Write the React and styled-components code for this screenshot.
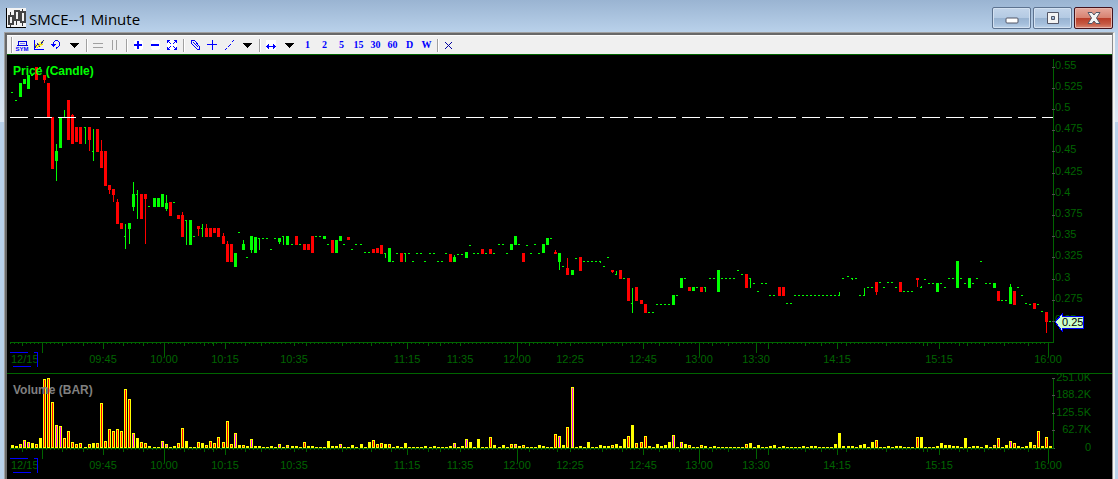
import React from 'react';
import styled, { createGlobalStyle } from 'styled-components';

const GlobalStyle = createGlobalStyle`
    * {
        box-sizing: border-box;
    }
    body {
        margin: 0;
        background: #b9d1ea;
        font-family: 'Liberation Sans', Arial, sans-serif;
    }
`;

const Window = styled.main`
    display: flex;
    flex-direction: column;
    min-height: 100vh;
    padding: 0 3px 0 4px;
    background:
        linear-gradient(#9ab4d2, #b9d1ea) 0 0 / 100% 32px no-repeat,
        linear-gradient(#b9d1ea, #dde8f4) 0 32px / 100% 90px no-repeat,
        #b9d1ea;
`;

const TitleBar = styled.header`
    display: flex;
    align-items: center;
    height: 32px;
    padding: 0 2px;
`;

const Title = styled.h1`
    flex: 1;
    margin: 0 0 0 3px;
    padding-top: 5px;
    font: 400 15px/20px 'Open Sans', sans-serif;
    color: #000;
`;

const WindowButtons = styled.div`
    display: flex;
    gap: 2px;
    padding-top: 4px;
`;

const WindowButton = styled.button`
    display: flex;
    align-items: center;
    justify-content: center;
    width: 39px;
    height: 22px;
    padding: 0;
    border: 1px solid ${({ $close }) => ($close ? '#43121c' : '#5d7390')};
    border-radius: 2px;
    background: ${({ $close }) => ($close
        ? 'linear-gradient(#e6a89c, #d88372 48%, #b93c28 50%, #c65a44 80%, #d98a78)'
        : 'linear-gradient(#c3d5ea, #b4cae3 48%, #98b3d1 50%, #a5bfdc 80%, #bdd3ea)')};
    box-shadow: inset 0 0 0 1px ${({ $close }) => ($close ? '#e7b5ab' : '#d3e1f1')};
`;

const Frame = styled.section`
    flex: 1;
    display: flex;
    flex-direction: column;
    border-top: 1px solid #a0a0a0;
    border-left: 1px solid #a0a0a0;
    border-right: 2px solid #f4f4f2;
`;

const FrameInner = styled.div`
    flex: 1;
    border-top: 2px solid #696969;
    border-left: 2px solid #696969;
    border-right: 1px solid #8c8c8c;
    background: #000;
`;

const ToolbarRow = styled.div`
    display: flex;
    align-items: center;
    height: 20px;
    padding-left: 4px;
    border-top: 1px solid #fff;
    border-bottom: 1px solid #006400;
    background: #f0f0f0;
`;

const Grip = styled.span`
    width: 3px;
    height: 16px;
    border-left: 1px solid #a0a0a0;
    background: #fff;
    background-clip: padding-box;
    border-right: 1px solid #f0f0f0;
`;

const Separator = styled.span`
    width: 2px;
    height: 13px;
    margin: 0 2px;
    border-left: 1px solid #a0a0a0;
    border-right: 1px solid #fff;
`;

const ToolButton = styled.button`
    display: flex;
    align-items: center;
    justify-content: center;
    width: ${({ $wide }) => ($wide ? 19 : 17)}px;
    height: 18px;
    padding: 0;
    border: none;
    background: transparent;
    font: bold 10px/18px 'Liberation Serif', 'Times New Roman', serif;
    color: #0000ff;
`;

const Icon = styled.svg`
    display: block;
    fill: none;
    stroke: none;
    shape-rendering: ${({ $smooth }) => ($smooth ? 'auto' : 'crispEdges')};
`;

const LogoIcon = styled(Icon)`
    margin-top: 4px;
`;

const Panel = styled.svg`
    display: block;
    width: 100%;
    overflow: visible;
    shape-rendering: crispEdges;
`;

const AxisText = styled.text`
    font-family: 'Liberation Sans', Arial, sans-serif;
    font-size: 11px;
    fill: ${({ $color }) => $color || '#006400'};
    text-anchor: ${({ $anchor }) => $anchor || 'start'};
`;

const PanelTitle = styled.text`
    font-family: 'Liberation Sans', Arial, sans-serif;
    font-size: 12px;
    font-weight: bold;
    fill: ${({ $color }) => $color};
`;

const GREEN = '#00ff00';
const RED = '#ff0000';
const AXIS = '#006400';
const RIGHT = 1053;

// x, colour, body top, body bottom, wick top, wick bottom
const CANDLES = [
    [19, 'g', 83, 97], [23, 'g', 79, 84], [27, 'g', 75, 89], [35, 'r', 67, 80],
    [43, 'r', 75, 80, 75, 83], [47, 'r', 83, 117], [51, 'r', 117, 169],
    [55, 'g', 151, 161, 144, 181], [59, 'g', 117, 148], [67, 'r', 100, 140],
    [71, 'r', 115, 144, 114, 144], [75, 'r', 127, 142], [79, 'r', 127, 144],
    [88, 'r', 127, 140, 127, 151], [96, 'r', 129, 152], [100, 'r', 151, 168, 140, 168],
    [104, 'r', 151, 186], [108, 'r', 185, 190, 185, 194], [112, 'r', 189, 195, 189, 202],
    [116, 'r', 202, 224, 199, 224], [120, 'r', 223, 229], [128, 'g', 223, 229, 223, 244],
    [132, 'g', 194, 207, 182, 211], [140, 'r', 194, 219], [144, 'r', 194, 199, 194, 244],
    [153, 'g', 198, 207], [157, 'g', 198, 207], [161, 'g', 194, 207],
    [165, 'g', 203, 209, 195, 211], [169, 'r', 202, 216], [177, 'r', 215, 219],
    [181, 'r', 215, 237, 212, 237], [189, 'g', 220, 245], [197, 'r', 226, 229, 226, 236],
    [205, 'r', 228, 237, 224, 237], [209, 'r', 228, 237], [213, 'r', 228, 233],
    [217, 'r', 228, 237], [222, 'r', 236, 244, 233, 244], [226, 'r', 244, 262, 241, 262],
    [230, 'r', 244, 262], [234, 'g', 253, 267], [242, 'g', 244, 250, 240, 250],
    [250, 'g', 236, 250, 236, 253], [254, 'g', 237, 253], [278, 'g', 238, 242, 238, 244],
    [286, 'g', 236, 245], [295, 'r', 236, 245], [303, 'r', 244, 250], [307, 'r', 244, 250],
    [311, 'r', 236, 253], [323, 'g', 236, 239], [331, 'r', 240, 253], [335, 'g', 240, 253],
    [339, 'g', 236, 241], [347, 'r', 237, 240], [372, 'r', 249, 253], [376, 'r', 248, 253],
    [380, 'r', 245, 254], [388, 'g', 248, 262], [400, 'r', 253, 262], [449, 'r', 254, 262],
    [453, 'g', 257, 262, 255, 262], [465, 'g', 252, 258], [481, 'r', 249, 254],
    [489, 'r', 249, 254], [510, 'g', 244, 250], [514, 'g', 236, 245], [522, 'r', 253, 262],
    [542, 'g', 244, 253], [546, 'g', 238, 245], [554, 'r', 252, 254, 250, 254],
    [558, 'g', 253, 262, 253, 270], [566, 'r', 268, 275, 258, 275], [571, 'g', 270, 275],
    [579, 'r', 257, 271], [611, 'r', 270, 272, 270, 273], [619, 'r', 270, 279],
    [627, 'r', 278, 301], [635, 'r', 287, 301], [640, 'r', 300, 304], [644, 'r', 304, 313],
    [672, 'g', 295, 305], [680, 'g', 278, 288], [688, 'r', 287, 291], [692, 'g', 287, 291],
    [700, 'r', 287, 292], [717, 'g', 270, 292], [745, 'r', 274, 288], [778, 'r', 287, 296],
    [782, 'r', 287, 296], [875, 'r', 282, 292, 282, 295], [899, 'r', 282, 292],
    [916, 'r', 278, 280, 278, 287], [936, 'g', 283, 292], [956, 'g', 261, 288],
    [968, 'g', 278, 288], [993, 'g', 283, 288], [997, 'r', 291, 301],
    [1009, 'g', 287, 304, 284, 304], [1013, 'r', 291, 305], [1033, 'r', 303, 309],
    [1045, 'r', 312, 322, 312, 333],
];

// open equals close, with a wick: x, y, wick top, wick bottom
const STEMS = [
    [63, 117, 110, 117], [84, 127, 127, 144], [92, 151, 129, 161], [124, 236, 224, 249],
    [136, 194, 190, 219], [185, 220, 220, 245], [201, 228, 224, 237], [258, 238, 238, 250],
    [282, 236, 236, 245], [384, 253, 253, 258], [404, 253, 253, 262], [599, 261, 261, 263],
    [615, 274, 271, 275], [631, 303, 288, 313], [704, 287, 287, 292], [749, 278, 278, 288],
    [838, 295, 292, 296], [851, 278, 278, 280], [863, 295, 288, 296], [920, 287, 286, 288],
];

// flat minutes grouped by price level: y, then every x
const FLATS = [
    [92, 11], [100, 15], [75, 31], [67, 39], [206, 148], [202, 173], [236, 193, 315, 319],
    [232, 238], [257, 246, 607], [238, 262, 266, 274, 550], [249, 270, 351],
    [244, 291, 299, 327, 343, 355, 360, 498, 502, 518, 534], [252, 364, 368],
    [261, 392, 412, 424, 437, 441, 583, 587, 591, 595, 980],
    [253, 396, 408, 416, 420, 429, 433, 445, 473, 477, 485, 493, 506, 530, 538],
    [254, 457, 461], [245, 469, 526], [266, 562, 603], [258, 575],
    [278, 623, 684, 709, 713, 721, 725, 729, 733, 842, 855, 948, 952, 960, 976],
    [312, 648, 652], [304, 656, 660, 664, 668, 1029, 1037], [287, 696, 867, 871, 883, 895, 944, 1017],
    [270, 737], [274, 741], [283, 753, 761, 765, 928, 932, 940, 964, 972, 985, 989],
    [291, 757, 903, 907, 911],
    [295, 676, 769, 773, 794, 798, 802, 806, 810, 814, 818, 822, 826, 830, 834, 859, 1021],
    [303, 786, 790, 1025], [276, 847], [282, 879, 887, 891], [279, 924],
    [300, 1001, 1005], [311, 1041], [321, 1049],
];

// one entry per traded minute, the letter is the colour of the core
const VOLUMES = `
    3 2 4m 8m 6m 5 4r 10 69r 70r 46r 23m 22m 10r 17r 6r 4r 5r
    1 4r 5 5r 45r 7r 19r 17r 19r 17r 59r 49r 15m 10 6r 5r 2
    1 1 7m 4m 1 2 5r 20r 7 1 1 6r 5 3r 7r 5r 11r
    6r 27r 4r 15m 3 3r 2 9m 2 2 1 1 2 1 4m 1 3m
    2 2 1 6r 2 2 1 1 1 7 2 2 4m 1 1 3 1
    4 1 6 8r 4r 5r 4 4r 1 2 1 5 1 1 1 1 2
    1 2 1 1 1 2 5m 1 2 9m 6 1 9 1 1 11r 3
    1 3 1 4r 4m 2 3r 1 1 1 3 2 1 1 14r 12m 3 21r
    61m 1 2 1 6 1 1 3 2 2 3r 4 2 9 12r 23 5r
    6r 12r 2 1 4 2 3 6 13m 1 6m 4 3r 1 1 3r 2
    1 2 1 1 1 1 1 1 1 4r 5 1 3 1 1 2 3
    1 2 1 1 1 1 2 1 2 2 1 1 1 1 4 15 2
    2 2 1 3 4 1 6 8r 1 1 2 1 2 2 1 1 1
    11r 11 1 1 1 2 5 3 3 2 2 1 10 1 2 2 1
    3 1 3m 10r 1 3 7m 5r 2 1 2 6 3r 17r 2 11r 2
`.trim().split(/\s+/);

const PRICES = ['0.55', '0.525', '0.5', '0.475', '0.45', '0.425', '0.4', '0.375', '0.35', '0.325', '0.3', '0.275', '0.25'];

const VOLUME_SCALE = [['251.0K', 378], ['188.2K', 395], ['125.5K', 413], ['62.7K', 430], ['0', 448]];

const TIMES = [
    ['09:45', 103], ['10:00', 164], ['10:15', 225], ['10:35', 294], ['11:15', 407], ['11:35', 460],
    ['12:00', 517], ['12:25', 570], ['12:45', 643], ['13:00', 699], ['13:30', 756], ['14:15', 837],
    ['15:15', 939], ['16:00', 1048],
];

const TICKS = {
    3: [22, 62, 83, 123, 143, 184, 204, 213, 245, 261, 294, 306, 342, 371, 391, 428, 440, 460, 529, 557, 570,
        602, 622, 659, 679, 712, 728, 805, 821, 846, 886, 923, 927, 959, 967, 984, 1004, 1028],
    6: [103, 225, 407, 643, 768, 837, 939],
    10: [42, 756],
    14: [164, 517, 699, 1048],
};

const minuteX = (index) => 11 + Math.floor(index * 4.05835);

const Candle = ({ data }) => {
    const [x, color, top, bottom, wickTop, wickBottom] = data;
    const fill = color === 'g' ? GREEN : RED;
    return (
        <g fill={fill}>
            <rect x={x} y={top} width="3" height={bottom - top} />
            {wickBottom && <rect x={x + 1} y={wickTop} width="1" height={wickBottom - wickTop} />}
        </g>
    );
}

const VolumeBar = ({ index, value }) => {
    const x = minuteX(index);
    const height = parseInt(value, 10);
    const core = { r: '#ff0000', m: '#ff00ff' }[value.slice(-1)];
    return (
        <g>
            <rect x={x} y={448 - height} width="3" height={height} fill="#ffff00" />
            {core && <rect x={x + 1} y={449 - height} width="1" height={height - 2} fill={core} />}
        </g>
    );
}

const TimeAxis = ({ y }) => (
    <g>
        <rect x="10" y={y} width={RIGHT - 9} height="1" fill={AXIS} />
        <g fill={AXIS}>
            {VOLUMES.map((_, i) => (
                <rect key={i} x={minuteX(i) - 1} y={y + 1} width="1" height="1" />
            ))}
            {Object.entries(TICKS).map(([length, xs]) => xs.map((x) => (
                <rect key={x} x={x} y={y + 1} width="1" height={length} />
            )))}
        </g>
        <AxisText x="11" y={y + 21}>12/15</AxisText>
        {TIMES.map(([label, x]) => (
            <AxisText key={label} x={x} y={y + 21} $anchor="middle">{label}</AxisText>
        ))}
        <g fill="#0000ff">
            <rect x="10" y={y + 10} width="18" height="1" />
            <rect x="34" y={y + 10} width="4" height="1" />
            <rect x="37" y={y + 10} width="1" height="15" />
            <rect x="13" y={y + 24} width="18" height="1" />
        </g>
    </g>
);

const PriceTag = () => (
    <g>
        <path d="M1055 322 L1062 314 V316 H1083 V328 H1062 V331 Z" fill="#ccffcc" />
        <path d="M1055 322 L1062 314 V316.5 H1083.5 V328 H1062 V331 Z" stroke="#0000ff" strokeWidth="1" fill="none" />
        <rect x="1063" y="328" width="21" height="1" fill="#0000ff" />
        <AxisText x="1062" y="326" $color="#000">0.25</AxisText>
    </g>
);

const PricePanel = () => (
    <Panel viewBox="7 55 1105 318" role="img" aria-label="Price chart">
        {CANDLES.map((data) => <Candle key={data[0]} data={data} />)}
        <g fill={GREEN}>
            {STEMS.map(([x, y, top, bottom]) => (
                <g key={x}>
                    <rect x={x} y={y} width="2" height="1" />
                    <rect x={x + 1} y={top} width="1" height={bottom - top} />
                </g>
            ))}
            {FLATS.map(([y, ...xs]) => xs.map((x) => (
                <rect key={x} x={x} y={y} width="2" height="1" />
            )))}
        </g>
        <path d="M10 117.5 H1053" stroke="#fff" strokeDasharray="18 6" />
        <rect x={RIGHT} y="59" width="1" height="284" fill={AXIS} />
        {PRICES.map((price, i) => {
            const y = 67 + Math.floor(i * 21.2);
            return (
                <g key={price}>
                    <rect x={RIGHT - 1} y={y} width="3" height="1" fill="#505050" />
                    <AxisText x="1055" y={y + 2}>{price}</AxisText>
                </g>
            );
        })}
        <TimeAxis y={342} />
        <PriceTag />
        <PanelTitle x="13" y="75" $color="#00ff00">Price (Candle)</PanelTitle>
    </Panel>
);

const VolumePanel = () => (
    <Panel viewBox="7 373 1105 106" role="img" aria-label="Volume chart">
        {VOLUMES.map((value, i) => <VolumeBar key={i} index={i} value={value} />)}
        <rect x={RIGHT} y="378" width="1" height="71" fill={AXIS} />
        {VOLUME_SCALE.map(([label, y]) => (
            <g key={label}>
                <rect x={RIGHT - 1} y={y} width="3" height="1" fill="#505050" />
                <AxisText x="1091" y={y + 3} $anchor="end">{label}</AxisText>
            </g>
        ))}
        <rect x="7" y="373" width="1105" height="1" fill={AXIS} />
        <TimeAxis y={448} />
        <PanelTitle x="13" y="394" $color="#808080">Volume (BAR)</PanelTitle>
    </Panel>
);

const AppIcon = () => (
    <LogoIcon width="20" height="20" viewBox="0 0 20 20">
        <rect width="20" height="20" fill="#f4f4f4" />
        <path d="M0.5 0 V20 M0 19.5 H20" stroke="#000" />
        <path d="M4.5 4 V7 M4.5 17 V19 M10.5 12 V17 M16.5 1 V4 M16.5 14 V18" stroke="#333" strokeWidth="1" />
        <rect x="3" y="8" width="4" height="8" stroke="#444" strokeWidth="2" />
        <rect x="9" y="3" width="4" height="9" stroke="#444" strokeWidth="2" />
        <rect x="15" y="4" width="4" height="10" stroke="#444" strokeWidth="2" />
    </LogoIcon>
);

const Triangle = () => (
    <Icon width="9" height="5" viewBox="0 0 9 5">
        <path d="M0 0 H9 V1 H8 V2 H7 V3 H6 V4 H5 V5 H4 V4 H3 V3 H2 V2 H1 V1 H0 Z" fill="#000" />
    </Icon>
);

const ICONS = {
    symbol: (
        <>
            <path d="M4.5 5.5 H12.5 V9.5 H4.5 Z M3 9.5 H14" stroke="#0000e0" />
            <path d="M6 7.5 H11" stroke="#8080ff" />
            <text x="8" y="15" textAnchor="middle" fontSize="6" fontWeight="bold" fontFamily="Liberation Sans" fill="#0000ff">SYM</text>
        </>
    ),
    chart: (
        <>
            <path d="M5 9 L9 6 L13 4 L12 8 L9 11 L5 12 Z" fill="#ffff66" />
            <path d="M3.5 4 V14 M3 13.5 H13" stroke="#0000ff" />
            <path d="M4 11.5 L6.5 8 L8.5 10 L12.5 4.5" stroke="#2222a0" />
            <path d="M4 8.5 L6.5 11.5 L9 8 L12 9" stroke="#e8d800" />
        </>
    ),
    undo: (
        <>
            <path d="M7 4.5 H10 M10 5.5 H11 M11.5 6 V10 M10 10.5 H11 M8 11.5 H10 M8 12.5 H9 M6 5.5 H7 M5.5 6 V8" stroke="#0000ff" />
            <path d="M3 8 H8 V9 H7 V10 H6 V11 H5 V10 H4 V9 H3 Z" fill="#0000ff" />
        </>
    ),
    rows: <path d="M3 7.5 H13 M3 11.5 H13" stroke="#a0a0a0" />,
    columns: <path d="M5.5 4 V14 M9.5 4 V14" stroke="#a0a0a0" />,
    zoomIn: (
        <>
            <rect x="4" y="4" width="9" height="10" rx="3" fill="#fff" />
            <path d="M4 9 H12 M8 5 V13" stroke="#0000ff" strokeWidth="2" />
        </>
    ),
    zoomOut: (
        <>
            <rect x="4" y="4" width="9" height="10" rx="3" fill="#fff" />
            <path d="M4 9 H12" stroke="#0000ff" strokeWidth="2" />
        </>
    ),
    expand: (
        <>
            <rect x="3" y="4" width="10" height="10" fill="#fff" />
            <path d="M3.5 7 V4.5 H6 M10 4.5 H12.5 V7 M12.5 11 V13.5 H10 M6 13.5 H3.5 V11 M4 5 L7 8 M12 5 L9 8 M12 13 L9 10 M4 13 L7 10" stroke="#0000ff" />
        </>
    ),
    pencil: <path d="M4.5 7.5 V4.5 H7.5 L12.5 10.5 M4.5 7.5 L10 13 M6 6 L11 11 M10 13.5 H13 M12.5 10 V13" stroke="#0000ff" />,
    cross: <path d="M3 8.5 H13 M8.5 4 V14" stroke="#0000ff" />,
    line: <path d="M4 13.5 H5 M5 12.5 H6 M7 10.5 H8 M8 9.5 H9 M9 8.5 H10 M11 5.5 H12 M12 4.5 H13" stroke="#0000ff" />,
    width: (
        <>
            <rect x="3" y="4" width="10" height="10" fill="#fff" />
            <path d="M3 10.5 H13 M5.5 8 V13 M10.5 8 V13 M4.5 9 V12 M11.5 9 V12" stroke="#0000ff" />
        </>
    ),
    remove: (
        <path
            d="M4 6.5 H5 M5 7.5 H6 M6 8.5 H7 M7 9.5 H8 M8 10.5 H9 M9 11.5 H10 M10 12.5 H11 M4 12.5 H5 M5 11.5 H6 M6 10.5 H7 M8 8.5 H9 M9 7.5 H10 M10 6.5 H11"
            stroke="#0000a0"
        />
    ),
};

const GROUPS = [
    ['symbol', 'chart', 'undo', 'menu'],
    ['rows', 'columns'],
    ['zoomIn', 'zoomOut', 'expand'],
    ['pencil', 'cross', 'line', 'menu'],
    ['width', 'menu', '1', '2', '5', '15', '30', '60', 'D', 'W'],
    ['remove'],
];

const Tool = ({ name }) => {
    if (name === 'menu') {
        return <ToolButton $wide aria-label="more"><Triangle /></ToolButton>;
    }
    if (ICONS[name]) {
        return (
            <ToolButton aria-label={name}>
                <Icon width="17" height="18" viewBox="0 0 17 18">{ICONS[name]}</Icon>
            </ToolButton>
        );
    }
    return <ToolButton>{name}</ToolButton>;
}

const Toolbar = () => (
    <ToolbarRow role="toolbar">
        <Grip />
        {GROUPS.map((tools, i) => (
            <React.Fragment key={i}>
                {i > 0 && <Separator />}
                {tools.map((name) => <Tool key={name} name={name} />)}
            </React.Fragment>
        ))}
    </ToolbarRow>
);

const App = () => (
    <>
        <GlobalStyle />
        <Window>
            <TitleBar>
                <AppIcon />
                <Title>SMCE--1 Minute</Title>
                <WindowButtons>
                    <WindowButton aria-label="Minimize">
                        <Icon $smooth width="14" height="14" viewBox="0 0 14 14">
                            <rect x="1" y="7" width="12" height="5" rx="1" fill="#fff" stroke="#535666" />
                        </Icon>
                    </WindowButton>
                    <WindowButton aria-label="Maximize">
                        <Icon $smooth width="14" height="14" viewBox="0 0 14 14">
                            <path d="M1.5 1.5 H12.5 V12.5 H1.5 Z M5.5 5.5 V8.5 H8.5 V5.5 Z" fill="#f4f4f4" fillRule="evenodd" stroke="#535666" />
                        </Icon>
                    </WindowButton>
                    <WindowButton $close aria-label="Close">
                        <Icon $smooth width="14" height="14" viewBox="0 0 14 14">
                            <path d="M1 1.5 H5 L7 4 L9 1.5 H13 L9.5 7 L13 12.5 H9 L7 10 L5 12.5 H1 L4.5 7 Z" fill="#f4f4f4" stroke="#535666" />
                        </Icon>
                    </WindowButton>
                </WindowButtons>
            </TitleBar>
            <Frame>
                <FrameInner>
                    <Toolbar />
                    <PricePanel />
                    <VolumePanel />
                </FrameInner>
            </Frame>
        </Window>
    </>
);

export default App;
